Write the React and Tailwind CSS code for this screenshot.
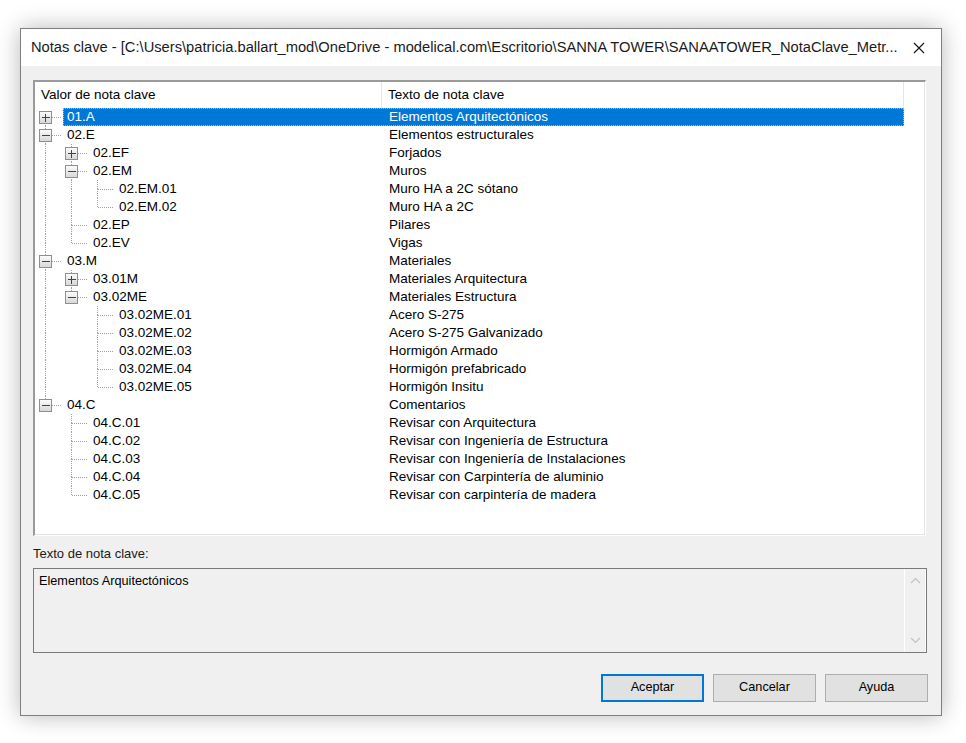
import React from "react";

const tree = [
  { k: "01.A", t: "Elementos Arquitectónicos", collapsed: true, selected: true },
  {
    k: "02.E",
    t: "Elementos estructurales",
    children: [
      { k: "02.EF", t: "Forjados", collapsed: true },
      {
        k: "02.EM",
        t: "Muros",
        children: [
          { k: "02.EM.01", t: "Muro HA a 2C sótano" },
          { k: "02.EM.02", t: "Muro HA a 2C" },
        ],
      },
      { k: "02.EP", t: "Pilares" },
      { k: "02.EV", t: "Vigas" },
    ],
  },
  {
    k: "03.M",
    t: "Materiales",
    children: [
      { k: "03.01M", t: "Materiales Arquitectura", collapsed: true },
      {
        k: "03.02ME",
        t: "Materiales Estructura",
        children: [
          { k: "03.02ME.01", t: "Acero S-275" },
          { k: "03.02ME.02", t: "Acero S-275 Galvanizado" },
          { k: "03.02ME.03", t: "Hormigón Armado" },
          { k: "03.02ME.04", t: "Hormigón prefabricado" },
          { k: "03.02ME.05", t: "Hormigón Insitu" },
        ],
      },
    ],
  },
  {
    k: "04.C",
    t: "Comentarios",
    children: [
      { k: "04.C.01", t: "Revisar con Arquitectura" },
      { k: "04.C.02", t: "Revisar con Ingeniería de Estructura" },
      { k: "04.C.03", t: "Revisar con Ingeniería de Instalaciones" },
      { k: "04.C.04", t: "Revisar con Carpintería de aluminio" },
      { k: "04.C.05", t: "Revisar con carpintería de madera" },
    ],
  },
];

// flatten tree into rows with info for the connector lines
function flatten(nodes, level, trail, out) {
  nodes.forEach((n, i) => {
    const hasNext = i < nodes.length - 1;
    out.push({
      ...n,
      level,
      trail,
      hasNext,
      first: level === 0 && i === 0,
      expander: n.collapsed ? "plus" : n.children ? "minus" : null,
    });
    if (n.children) flatten(n.children, level + 1, [...trail, hasNext], out);
  });
  return out;
}

const rows = flatten(tree, 0, [], []);

const labelWidth = ["w-[319px]", "w-[293px]", "w-[267px]"];

const DOT = "#a0a0a0";

function Cell({ top, bottom, horiz, expander }) {
  return (
    <svg width="26" height="18" className="shrink-0" shapeRendering="crispEdges">
      <defs>
        <linearGradient id="bx" x1="0" y1="0" x2="0" y2="1">
          <stop offset="0" stopColor="#fdfdfd" />
          <stop offset="1" stopColor="#d6d6d6" />
        </linearGradient>
      </defs>
      {top && <line x1="10.5" y1="0" x2="10.5" y2="9" stroke={DOT} strokeDasharray="1 1" />}
      {bottom && <line x1="10.5" y1="9" x2="10.5" y2="18" stroke={DOT} strokeDasharray="1 1" />}
      {horiz && <line x1="11" y1="9.5" x2="26" y2="9.5" stroke={DOT} strokeDasharray="1 1" />}
      {expander && (
        <g>
          <rect x="4.5" y="3.5" width="12" height="12" fill="url(#bx)" stroke="#8f8f8f" />
          <line x1="7" y1="9.5" x2="15" y2="9.5" stroke="#2b3f8c" />
          {expander === "plus" && <line x1="10.5" y1="6" x2="10.5" y2="14" stroke="#2b3f8c" />}
        </g>
      )}
    </svg>
  );
}

function TreeRow({ row }) {
  const cells = [];
  for (let c = 0; c < row.level; c++) {
    cells.push(<Cell key={c} top={row.trail[c]} bottom={row.trail[c]} />);
  }
  cells.push(
    <Cell
      key="own"
      top={!row.first}
      bottom={row.hasNext}
      horiz
      expander={row.expander}
    />
  );
  return (
    <div className="flex h-[18px] items-center">
      {cells}
      <div
        className={
          "ml-[2px] flex h-[18px] items-center border border-dotted " +
          (row.selected ? "bg-[#0078d7] text-white border-[#f7a44a]" : "border-transparent text-black")
        }
      >
        <div className={"pl-[3px] whitespace-nowrap " + labelWidth[row.level]}>{row.k}</div>
        <div className="w-[520px] whitespace-nowrap pl-[6px]">{row.t}</div>
      </div>
    </div>
  );
}

export default function App() {
  return (
    <div className="h-[743px] w-[966px] overflow-hidden bg-white pl-[20px] pt-[28px]">
      <div className="flex h-[688px] w-[922px] flex-col border border-[#7f7f7f] bg-[#f0f0f0] shadow-[0_0_22px_rgba(0,0,0,0.28)]">
        {/* title bar */}
        <div className="flex h-[37px] items-center bg-white pl-[10px] pr-[16px]">
          <div
            className="min-w-0 flex-1 overflow-hidden whitespace-nowrap text-[14.7px] text-[#1a1a1a]"
            style={{ fontFamily: '"Liberation Sans", Arial, sans-serif' }}
          >
            Notas clave - [C:\Users\patricia.ballart_mod\OneDrive - modelical.com\Escritorio\SANNA TOWER\SANAATOWER_NotaClave_Metr...
          </div>
          <svg width="12" height="12" viewBox="0 0 12 12" className="ml-2 shrink-0">
            <path d="M1 1 L11 11 M11 1 L1 11" stroke="#111" strokeWidth="1.1" />
          </svg>
        </div>

        <div
          className="flex flex-1 flex-col px-[12px] pt-[14px]"
          style={{ fontFamily: '"Liberation Sans", Arial, sans-serif' }}
        >
          {/* tree list */}
          <div className="h-[456px] w-[893px] border-l-2 border-t-2 border-b border-r border-l-[#9a9a9a] border-t-[#9a9a9a] border-b-white border-r-white">
            <div className="h-full w-full border-b border-r border-[#e3e3e3] bg-white text-[13.5px]">
              <div className="flex h-[26px] text-black">
                <div className="flex w-[347px] items-center border-r border-[#e5e5e5] pl-[6px]">Valor de nota clave</div>
                <div className="flex w-[522px] items-center border-r border-[#e5e5e5] pl-[6px]">Texto de nota clave</div>
              </div>
              <div className="flex flex-col">
                {rows.map((r) => (
                  <TreeRow key={r.k} row={r} />
                ))}
              </div>
            </div>
          </div>

          <div className="mt-[10px] h-[15px] text-[13px] leading-[15px] text-[#1a1a1a]">Texto de nota clave:</div>

          {/* readonly text box */}
          <div className="mt-[7px] flex h-[85px] w-[894px] border border-[#7a7a7a] bg-[#f0f0f0]">
            <div className="flex-1 pl-[5px] pt-[3px] text-[12.7px] text-black">Elementos Arquitectónicos</div>
            <div className="flex w-[22px] flex-col items-center justify-between border-l border-r border-white py-[8px]">
              <svg width="11" height="7" viewBox="0 0 11 7">
                <path d="M1 6 L5.5 1.5 L10 6" fill="none" stroke="#c2c2c2" strokeWidth="1.2" />
              </svg>
              <svg width="11" height="7" viewBox="0 0 11 7">
                <path d="M1 1 L5.5 5.5 L10 1" fill="none" stroke="#c2c2c2" strokeWidth="1.2" />
              </svg>
            </div>
          </div>

          {/* buttons */}
          <div className="mt-[21px] flex justify-end gap-[9px] pr-[1px] text-[12.7px] text-black">
            <button className="h-[28px] w-[103px] border-2 border-[#0078d7] bg-[#e1e1e1]">Aceptar</button>
            <button className="h-[28px] w-[103px] border border-[#adadad] bg-[#e1e1e1]">Cancelar</button>
            <button className="h-[28px] w-[103px] border border-[#adadad] bg-[#e1e1e1]">Ayuda</button>
          </div>
        </div>
      </div>
    </div>
  );
}
